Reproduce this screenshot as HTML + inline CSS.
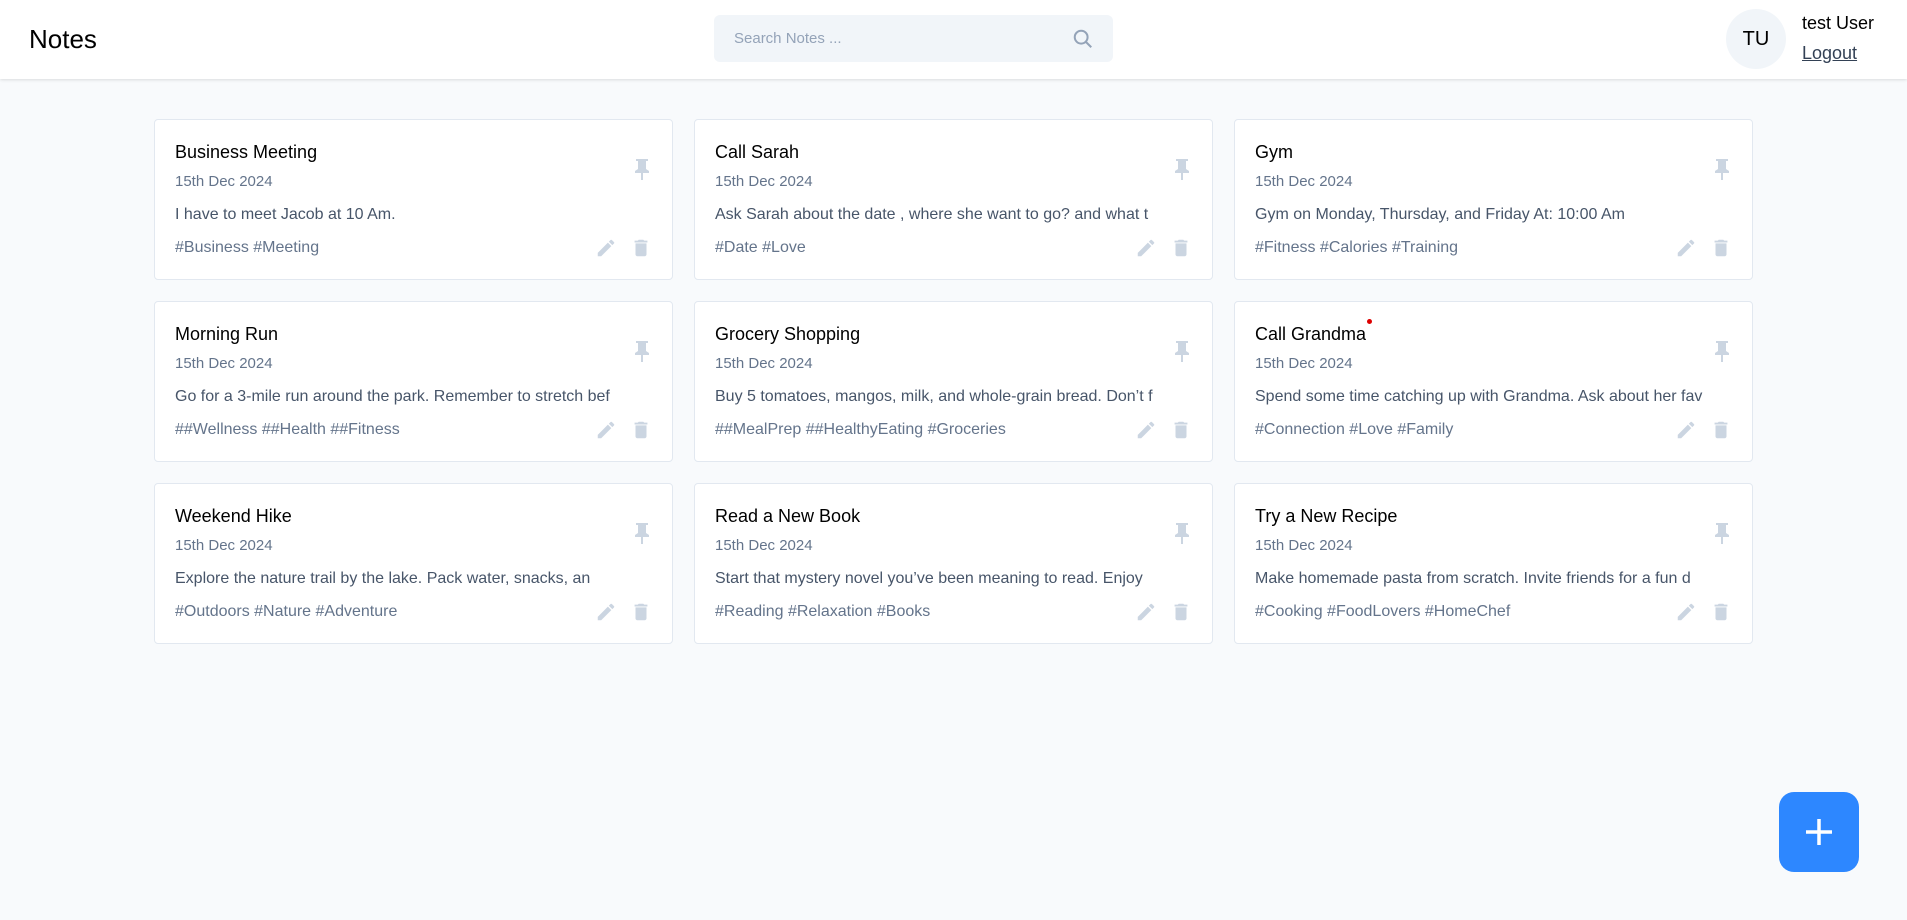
<!DOCTYPE html>
<html><head><meta charset="utf-8"><style>
*{box-sizing:border-box;margin:0;padding:0}
body{width:1907px;height:920px;background:#f8fafc;font-family:"Liberation Sans",sans-serif;position:relative;overflow:hidden}
.hdr{position:absolute;left:0;top:0;width:1907px;height:79px;background:#fff;box-shadow:0 1px 3px rgba(0,0,0,.12)}
.logo{position:absolute;left:29px;top:24px;font-size:26px;color:#000;font-weight:500}
.search{position:absolute;left:714px;top:15px;width:399px;height:47px;background:#f1f5f9;border-radius:6px}
.search span{position:absolute;left:20px;top:15px;font-size:15px;color:#94a3b8}
.av{position:absolute;left:1726px;top:9px;width:60px;height:60px;border-radius:50%;background:#f1f5f9;font-size:20px;text-align:center;line-height:60px;color:#000}
.un{position:absolute;left:1802px;top:13px;font-size:18px;color:#000;font-weight:500}
.lo{position:absolute;left:1802px;top:43px;font-size:18px;color:#334155;text-decoration:underline}
.card{position:absolute;width:519px;height:161px;background:#fff;border:1px solid #e2e8f0;border-radius:4px}
.t{position:absolute;left:20px;top:22px;font-size:18px;color:#000}
.d{position:absolute;left:20px;top:53px;font-size:15px;color:#64748b}
.x{position:absolute;left:20px;top:86px;font-size:16px;color:#475569;white-space:nowrap;overflow:hidden;width:458px}
.g{position:absolute;left:20px;top:119px;font-size:16px;color:#64748b}
.ic{position:absolute}
.fab{position:absolute;left:1779px;top:792px;width:80px;height:80px;border-radius:15px;background:#2d87ff}
</style></head><body>
<div class="hdr">
<div class="logo">Notes</div>
<div class="search"><span>Search Notes ...</span>
<svg style="position:absolute;left:358px;top:13px" width="22" height="22" viewBox="0 0 24 24" fill="none" stroke="#94a3b8" stroke-width="2.2"><circle cx="10" cy="10" r="7"/><path d="M15 15l6 6"/></svg></div>
<div class="av">TU</div>
<div class="un">test User</div>
<div class="lo">Logout</div>
</div>
<div id="cards"></div>
<div class="fab"><svg width="80" height="80"><path d="M40 27v26M27 40h26" stroke="#fff" stroke-width="3.5"/></svg></div>
<div style="position:absolute;left:1367px;top:319px;width:5px;height:5px;border-radius:50%;background:#d00"></div>
<script>
const data=[
["Business Meeting","I have to meet Jacob at 10 Am.","#Business #Meeting"],
["Call Sarah","Ask Sarah about the date , where she want to go? and what t","#Date #Love"],
["Gym","Gym on Monday, Thursday, and Friday At: 10:00 Am","#Fitness #Calories #Training"],
["Morning Run","Go for a 3-mile run around the park. Remember to stretch bef","##Wellness ##Health ##Fitness"],
["Grocery Shopping","Buy 5 tomatoes, mangos, milk, and whole-grain bread. Don’t f","##MealPrep ##HealthyEating #Groceries"],
["Call Grandma","Spend some time catching up with Grandma. Ask about her fav","#Connection #Love #Family"],
["Weekend Hike","Explore the nature trail by the lake. Pack water, snacks, an","#Outdoors #Nature #Adventure"],
["Read a New Book","Start that mystery novel you’ve been meaning to read. Enjoy","#Reading #Relaxation #Books"],
["Try a New Recipe","Make homemade pasta from scratch. Invite friends for a fun d","#Cooking #FoodLovers #HomeChef"]];
const xs=[154,694,1234],ys=[119,301,483];let h="";
data.forEach((c,i)=>{const x=xs[i%3],y=ys[Math.floor(i/3)];
h+=`<div class="card" style="left:${x}px;top:${y}px"><div class="t">${c[0]}</div><div class="d">15th Dec 2024</div><div class="x">${c[1]}</div><div class="g">${c[2]}</div>
<svg class="ic" style="left:476px;top:37px" width="22" height="24" viewBox="0 0 22 24"><path d="M5 2h12v2h-2v8l3 2v2H4v-2l3-2V4H5z" fill="#cbd5e1"/><path d="M11 16v7" stroke="#cbd5e1" stroke-width="2"/></svg>
<svg class="ic" style="left:440px;top:117px" width="22" height="22" viewBox="0 0 24 24"><path d="M3 17.25V21h3.75L17.81 9.94l-3.75-3.75L3 17.25zM20.71 7.04a1 1 0 000-1.41l-2.34-2.34a1 1 0 00-1.41 0l-1.83 1.83 3.75 3.75 1.83-1.83z" fill="#cbd5e1"/></svg>
<svg class="ic" style="left:475px;top:116px" width="22" height="24" viewBox="0 0 24 24"><path d="M6 19c0 1.1.9 2 2 2h8c1.1 0 2-.9 2-2V7H6v12zM19 4h-3.5l-1-1h-5l-1 1H5v2h14V4z" fill="#cbd5e1"/></svg></div>`});
document.getElementById('cards').innerHTML=h;
</script>
</body></html>
